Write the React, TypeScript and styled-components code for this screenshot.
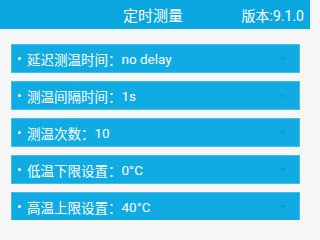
import React from "react";
import styled, { createGlobalStyle } from "styled-components";

const GlobalStyle = createGlobalStyle`
  body {
    margin: 0;
    background-color: #f6f6f6;
    font-family: Roboto, "Noto Sans CJK SC", sans-serif;
  }
`;

const Page = styled.div`
  width: 310px;
  height: 220px;
  overflow: hidden;
  background-color: #f6f6f6;
`;

const Header = styled.header`
  height: 29px;
  background-color: #09a6df;
  color: #ffffff;
  display: grid;
  grid-template-columns: 1fr auto 1fr;
  align-items: center;
  padding: 0 6px 0 0;
`;

const Title = styled.div`
  grid-column: 2;
  font-size: 15px;
  padding-left: 2px;
`;

const Version = styled.div`
  grid-column: 3;
  justify-self: end;
  font-size: 14px;
`;

const List = styled.div`
  display: flex;
  flex-direction: column;
  gap: 8px;
  padding: 15px 10px 0 11px;
`;

const SelectRow = styled.div`
  height: 29px;
  box-sizing: border-box;
  background-color: #10abe2;
  border: 1px solid #45bdea;
  display: flex;
  align-items: center;
  padding: 0 12px 0 6px;
  color: #ffffff;
  font-size: 13.5px;
`;

const Bullet = styled.span`
  width: 3px;
  height: 3px;
  border-radius: 50%;
  background-color: #ffffff;
  margin-right: 6px;
  flex-shrink: 0;
`;

const Label = styled.span`
  white-space: nowrap;
`;

const Value = styled.span`
  flex: 1;
  white-space: nowrap;
`;

const Arrow = styled.span`
  width: 0;
  height: 0;
  border-left: 4px solid transparent;
  border-right: 4px solid transparent;
  border-top: 4px solid #0e9fd6;
`;

const rows = [
  { label: "延迟测温时间：", value: "no delay" },
  { label: "测温间隔时间：", value: "1s" },
  { label: "测温次数：", value: "10" },
  { label: "低温下限设置：", value: "0°C" },
  { label: "高温上限设置：", value: "40°C" },
];

const App: React.FC = () => {
  return (
    <Page>
      <GlobalStyle />
      <Header>
        <Title>定时测量</Title>
        <Version>版本:9.1.0</Version>
      </Header>
      <List>
        {rows.map((r) => (
          <SelectRow key={r.label}>
            <Bullet />
            <Label>{r.label}</Label>
            <Value>{r.value}</Value>
            <Arrow />
          </SelectRow>
        ))}
      </List>
    </Page>
  );
};

export default App;
